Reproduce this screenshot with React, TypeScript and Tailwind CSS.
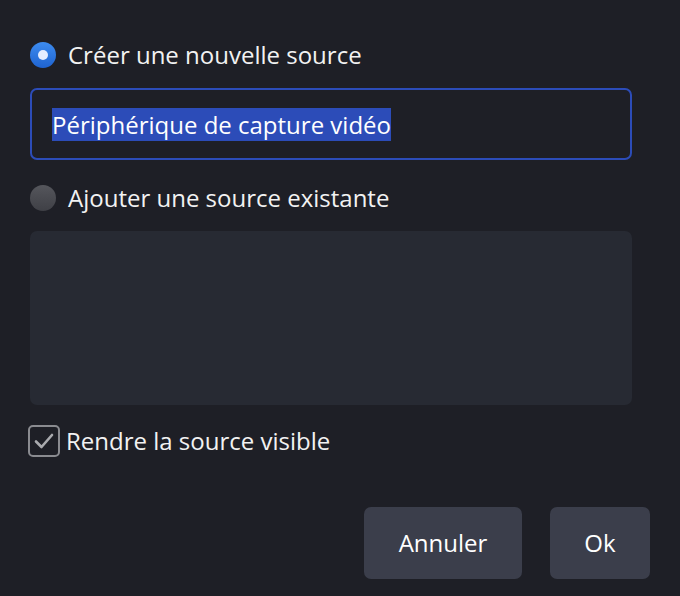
import React from "react";

export default function App() {
  return (
    <div
      className="w-[680px] h-[596px] bg-[#1e1f26] text-white flex flex-col pl-[30px] pr-[48px] pt-[40px]"
      style={{ fontFamily: '"Open Sans", "Noto Sans", sans-serif' }}
    >
      <div className="flex items-center gap-[12px] h-[30px]">
        <div className="w-[26px] h-[26px] rounded-full bg-gradient-to-b from-[#3d8cf0] to-[#1f63d0] flex items-center justify-center">
          <div className="w-[10px] h-[10px] rounded-full bg-[#e4edff]" />
        </div>
        <span className="text-[24px] leading-none text-[#f2f2f2]">Créer une nouvelle source</span>
      </div>

      <div className="mt-[18px] h-[72px] rounded-[7px] border-2 border-[#2c4cb8] flex items-center pl-[20px]">
        <span className="text-[24px] leading-[33px] bg-[#2c4cb8] text-white">Périphérique de capture vidéo</span>
      </div>

      <div className="flex items-center gap-[12px] h-[30px] mt-[23px]">
        <div className="w-[26px] h-[26px] rounded-full bg-gradient-to-b from-[#55565c] to-[#3f4046]" />
        <span className="text-[24px] leading-none text-[#f2f2f2]">Ajouter une source existante</span>
      </div>

      <div className="mt-[18px] h-[174px] rounded-[7px] bg-[#272a33]" />

      <div className="flex items-center gap-[6px] mt-[20px] -ml-[2px]">
        <div className="w-[32px] h-[32px] rounded-[5px] border-2 border-[#8a8b90] flex items-center justify-center">
          <svg width="22" height="22" viewBox="0 0 22 22" fill="none">
            <path d="M3 11.5 L8.5 17 L19 5" stroke="#a9aaae" strokeWidth="2.6" strokeLinecap="round" strokeLinejoin="round" />
          </svg>
        </div>
        <span className="text-[24px] leading-none text-[#f2f2f2]">Rendre la source visible</span>
      </div>

      <div className="flex justify-end gap-[28px] mt-[50px] mr-[-18px]">
        <button className="w-[158px] h-[72px] rounded-[7px] bg-[#3b3e4b] text-[24px] text-white">Annuler</button>
        <button className="w-[100px] h-[72px] rounded-[7px] bg-[#3b3e4b] text-[24px] text-white">Ok</button>
      </div>
    </div>
  );
}
